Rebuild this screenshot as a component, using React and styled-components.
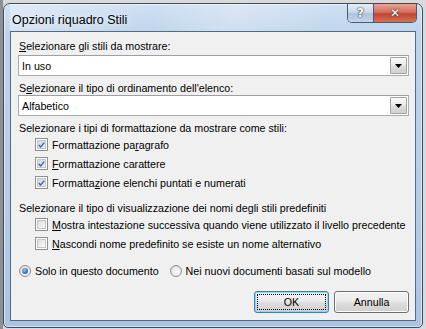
import React from "react";
import styled, { createGlobalStyle } from "styled-components";

const Global = createGlobalStyle`
  html, body {
    margin: 0;
    padding: 0;
    width: 426px;
    height: 329px;
    overflow: hidden;
    background: linear-gradient(90deg, #8c8f93 0px, #8c8f93 3px, #d9dadc 3px);
    font-family: "Liberation Sans", Arial, sans-serif;
  }
`;

const Window = styled.div`
  margin: 3px 0 0 3px;
  width: 420px;
  height: 325px;
  box-sizing: border-box;
  border: 1px solid #3d4b5c;
  border-radius: 7px 7px 5px 5px;
  background: linear-gradient(180deg, #cfe0f2 0%, #bcd3ec 10%, #b5cde8 60%, #a9c4e4 100%);
  box-shadow: inset 0 0 0 1px rgba(255, 255, 255, 0.55);
  padding: 0 6px 6px 6px;
  display: flex;
  flex-direction: column;
`;

const TitleBar = styled.div`
  height: 27px;
  display: flex;
  align-items: flex-start;
  justify-content: space-between;
  background: linear-gradient(100deg, rgba(255,255,255,0.35) 0%, rgba(255,255,255,0) 35%, rgba(255,255,255,0.25) 55%, rgba(255,255,255,0) 80%);
`;

const Title = styled.div`
  font-size: 12.5px;
  color: #000;
  padding: 9px 0 0 2px;
  text-shadow: 0 0 6px rgba(255, 255, 255, 0.9);
`;

const Caption = styled.div`
  display: flex;
  margin: 0 -1px 0 0;
  border: 1px solid #4b5b6f;
  border-top: none;
  border-radius: 0 0 5px 5px;
  overflow: hidden;
  height: 18px;
`;

const CapButton = styled.div`
  width: ${p => p.$w}px;
  height: 18px;
  display: flex;
  align-items: center;
  justify-content: center;
  font-family: "DejaVu Sans", sans-serif;
  font-weight: bold;
  font-size: 12px;
  color: #fff;
  text-shadow: 0 0 1px #28323e, 0 0 2px #28323e;
  background: ${p => p.$close
    ? "linear-gradient(180deg, #e8a598 0%, #d66e5c 45%, #c24431 55%, #d4705a 100%)"
    : "linear-gradient(180deg, #e6eef7 0%, #c9d8ea 45%, #aec3dc 55%, #c4d6ec 100%)"};
  & + & { border-left: 1px solid #4b5b6f; }
`;

const Client = styled.div`
  flex: 1;
  border: 1px solid #56697f;
  background: #f0f0f0;
  padding: 0 6px 0 7px;
  display: flex;
  flex-direction: column;
  font-size: 10.7px;
  color: #000;
`;

const Label = styled.div`
  height: 14px;
  line-height: 14px;
  padding-left: 1px;
  margin-top: ${p => p.$mt}px;
  white-space: nowrap;
`;

const Key = styled.span`
  text-decoration: underline;
  text-underline-offset: 1px;
`;

const Combo = styled.div`
  height: 21px;
  box-sizing: border-box;
  margin-top: ${p => p.$mt}px;
  border: 1px solid #abadb3;
  border-top-color: #9ea0a6;
  background: #fff;
  display: flex;
  align-items: center;
  padding: 0 1px 0 3px;
`;

const ComboText = styled.div`
  flex: 1;
  white-space: nowrap;
`;

const ArrowBtn = styled.div`
  width: 15px;
  height: 15px;
  border: 1px solid #a3a3a3;
  border-radius: 1px;
  background: linear-gradient(180deg, #f7f7f7 0%, #ececec 45%, #dcdcdc 55%, #d0d0d0 100%);
  display: flex;
  align-items: center;
  justify-content: center;
`;

const Row = styled.div`
  height: 19px;
  display: flex;
  align-items: center;
  padding-left: ${p => p.$pl}px;
  margin-top: ${p => p.$mt || 0}px;
  white-space: nowrap;
`;

const Box = styled.div`
  width: 13px;
  height: 13px;
  box-sizing: border-box;
  border: 1px solid #8e8f8f;
  background: #fff;
  padding: 1px;
  margin-right: 4px;
  flex: none;
  & > div {
    width: 100%;
    height: 100%;
    box-sizing: border-box;
    border: 1px solid #c4c5c7;
    background: ${p => p.$on
      ? "linear-gradient(135deg, #c9d8ec 0%, #e9f0f9 100%)"
      : "linear-gradient(135deg, #dcdcdc 0%, #fbfbfb 100%)"};
    display: flex;
    align-items: center;
    justify-content: center;
  }
`;

const Radio = styled.div`
  width: 12px;
  height: 12px;
  box-sizing: border-box;
  border-radius: 50%;
  border: 1px solid #8e8f8f;
  background: radial-gradient(circle at 60% 60%, #fdfdfd 0%, #e6e6e6 60%, #d2d2d2 100%);
  display: flex;
  align-items: center;
  justify-content: center;
  margin-right: 4px;
  margin-left: ${p => p.$ml || 0}px;
  flex: none;
  &::after {
    content: "";
    display: ${p => p.$on ? "block" : "none"};
    width: 6px;
    height: 6px;
    border-radius: 50%;
    background: radial-gradient(circle at 40% 35%, #9ccbf0 0%, #3a77b8 55%, #1c4f8c 100%);
  }
`;

const Buttons = styled.div`
  display: flex;
  justify-content: flex-end;
  gap: 5px;
  margin-top: 11px;
`;

const Button = styled.div`
  width: 75px;
  height: 22px;
  box-sizing: border-box;
  border: 1px solid ${p => p.$def ? "#3c7fb1" : "#707070"};
  border-radius: 3px;
  background: linear-gradient(180deg, #f2f2f2 0%, #ebebeb 45%, #dddddd 55%, #cfcfcf 100%);
  box-shadow: inset 0 0 0 1px ${p => p.$def ? "#8fd6f5" : "#fcfcfc"};
  display: flex;
  align-items: center;
  justify-content: center;
  padding: 2px;
  & > span {
    flex: 1;
    align-self: stretch;
    display: flex;
    align-items: center;
    justify-content: center;
    border: 1px dotted ${p => p.$def ? "#000" : "transparent"};
  }
`;

const Check = () => (
  <svg width="9" height="8" viewBox="0 0 9 8">
    <path d="M1 4 L3.5 6.5 L8 1" fill="none" stroke="#4a5f97" strokeWidth="1.8" />
  </svg>
);

const Arrow = () => (
  <svg width="7" height="4" viewBox="0 0 7 4">
    <path d="M0 0 H7 L3.5 4 Z" fill="#000" />
  </svg>
);

const CheckRow = ({ on, mt, children }) => (
  <Row $pl={17} $mt={mt}>
    <Box $on={on}><div>{on && <Check />}</div></Box>
    <span>{children}</span>
  </Row>
);

export default function App() {
  return (
    <>
      <Global />
      <Window>
        <TitleBar>
          <Title>Opzioni riquadro Stili</Title>
          <Caption>
            <CapButton $w={25}>?</CapButton>
            <CapButton $w={42} $close>✕</CapButton>
          </Caption>
        </TitleBar>
        <Client>
          <Label $mt={7}><Key>S</Key>elezionare gli stili da mostrare:</Label>
          <Combo $mt={2}><ComboText>In uso</ComboText><ArrowBtn><Arrow /></ArrowBtn></Combo>
          <Label $mt={5}>S<Key>e</Key>lezionare il tipo di ordinamento dell'elenco:</Label>
          <Combo $mt={0}><ComboText>Alfabetico</ComboText><ArrowBtn><Arrow /></ArrowBtn></Combo>
          <Label $mt={5}>Selezionare i tipi di formattazione da mostrare come stili:</Label>
          <CheckRow on>Formattazione pa<Key>r</Key>agrafo</CheckRow>
          <CheckRow on><Key>F</Key>ormattazione carattere</CheckRow>
          <CheckRow on>Formatta<Key>z</Key>ione elenchi puntati e numerati</CheckRow>
          <Label $mt={9}>Selezionare il tipo di visualizzazione dei nomi degli stili predefiniti</Label>
          <CheckRow><Key>M</Key>ostra intestazione successiva quando viene utilizzato il livello precedente</CheckRow>
          <CheckRow><Key>N</Key>ascondi nome predefinito se esiste un nome alternativo</CheckRow>
          <Row $pl={1} $mt={8}>
            <Radio $on />
            <span>Solo in questo documento</span>
            <Radio $ml={11} />
            <span>Nei nuovi documenti basati sul modello</span>
          </Row>
          <Buttons>
            <Button $def><span>OK</span></Button>
            <Button><span>Annulla</span></Button>
          </Buttons>
        </Client>
      </Window>
    </>
  );
}
